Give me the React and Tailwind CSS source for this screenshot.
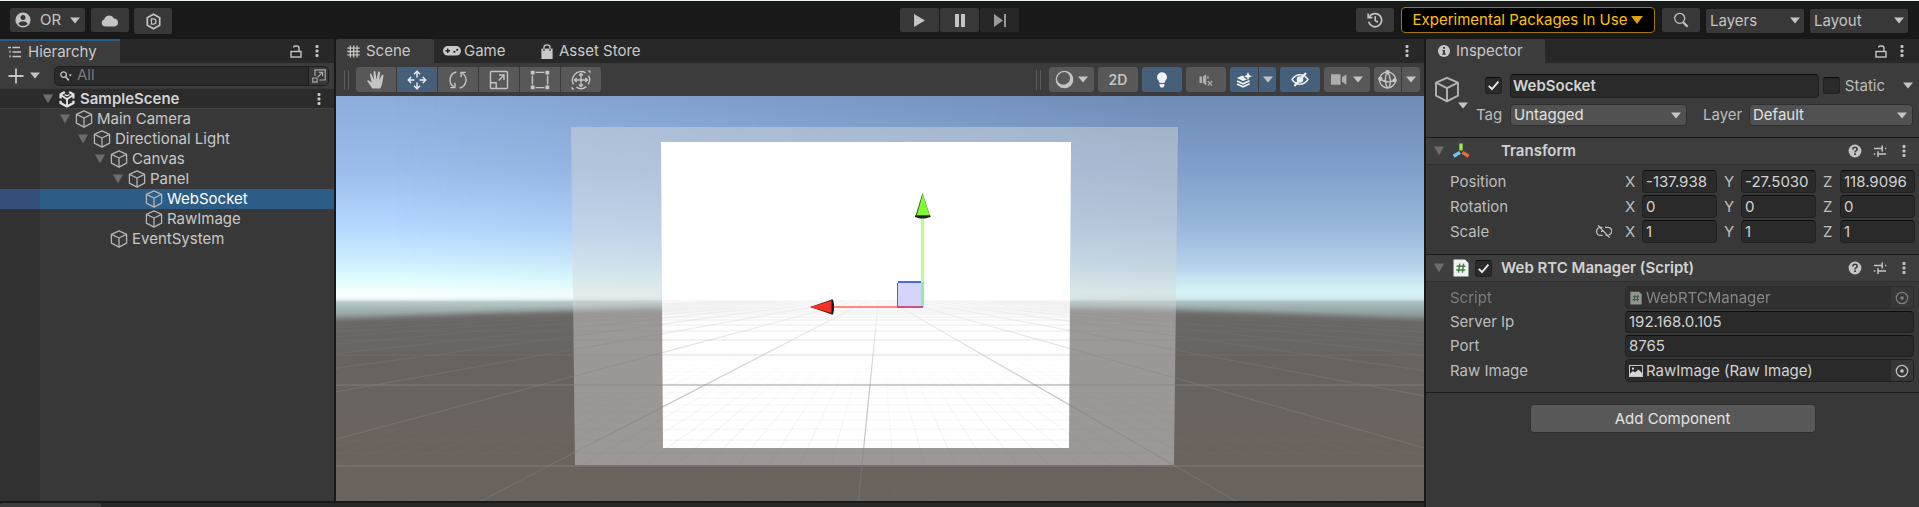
import React from "react";

const Caret = ({ className = "" }) => (
  <svg viewBox="0 0 10 7" className={"h-[7px] w-[10px] shrink-0 " + className} aria-hidden="true">
    <path d="M0 0.5h10L5 6.5z" fill="currentColor" />
  </svg>
);

const Foldout = () => (
  <svg viewBox="0 0 12 10" className="h-[10px] w-[12px] shrink-0 text-[#6c6c6c]" aria-hidden="true">
    <path d="M1 0.5h10L6 9.5z" fill="currentColor" />
  </svg>
);

const Dots = () => (
  <svg viewBox="0 0 4 14" className="h-[14px] w-[4px]" fill="#c4c4c4" aria-hidden="true">
    <rect x="0.5" y="1" width="3" height="3" rx="1" />
    <rect x="0.5" y="5.5" width="3" height="3" rx="1" />
    <rect x="0.5" y="10" width="3" height="3" rx="1" />
  </svg>
);

const DotsButton = () => (
  <button type="button" aria-label="More options" className="flex h-5 w-3 items-center justify-center">
    <Dots />
  </button>
);

const Lock = () => (
  <svg viewBox="0 0 12 13" className="h-[13px] w-[12px]" fill="none" stroke="#c4c4c4" strokeWidth="1.4" aria-hidden="true">
    <rect x="1" y="6.5" width="10" height="5.5" />
    <path d="M9 6.5V3.2Q9 1 7 1H5.5Q3.6 1 3.6 2.6" />
  </svg>
);

const Cube = ({ className = "h-[18px] w-[18px]" }) => (
  <svg viewBox="0 0 18 18" className={"shrink-0 " + className} fill="none" stroke="#b4b4b4" strokeWidth="1.3" strokeLinejoin="round" aria-hidden="true">
    <path d="M9 0.9L16.6 4.3V13.2L9 17.2L1.4 13.2V4.3Z" />
    <path d="M1.4 4.3L9 8L16.6 4.3M9 8V17.2" />
  </svg>
);

const UnityLogo = () => (
  <svg viewBox="0 0 18 18" className="h-[18px] w-[18px] shrink-0" fill="none" stroke="#e4e4e4" strokeWidth="2.3" aria-hidden="true">
    <path d="M6.8 1.9L2.6 4.4V8.6M11.2 1.9L15.4 4.4V8.6M2.6 10.8V13L9 16.4L15.4 13V10.8" />
    <path d="M9 9.2V16M9 9.2L3.2 5.2M9 9.2L14.8 5.2" strokeWidth="1.9" />
    <path d="M6.6 4.6L9 5.8L11.4 4.6" strokeWidth="1.4" />
  </svg>
);

const ScriptIcon = ({ className = "h-[18px] w-[16px]" }) => (
  <svg viewBox="0 0 16 18" className={"shrink-0 " + className} aria-hidden="true">
    <path d="M0.5 0.5H12L15.5 4V17.5H0.5Z" fill="#f0f0f0" />
    <path d="M6.7 4.6L5.5 13.6M10.6 4.6L9.4 13.6M3.6 7.3H12.4M3.2 11H12" stroke="#3d7d43" strokeWidth="1.4" fill="none" />
  </svg>
);

const Help = () => (
  <svg viewBox="0 0 14 14" className="h-[14px] w-[14px]" aria-hidden="true">
    <circle cx="7" cy="7" r="6.4" fill="#c4c4c4" />
    <path d="M4.9 5.4Q4.9 3.3 7 3.3T9.1 5.2Q9.1 6.3 7.9 6.9Q7 7.4 7 8.4" fill="none" stroke="#3c3c3c" strokeWidth="1.6" />
    <rect x="6.1" y="9.3" width="1.8" height="1.7" fill="#3c3c3c" />
  </svg>
);

const Preset = () => (
  <svg viewBox="0 0 14 14" className="h-[14px] w-[14px]" fill="none" stroke="#c4c4c4" strokeWidth="1.5" aria-hidden="true">
    <path d="M1 4.5H8.6M12 4.5H13.2M9.2 1.5V7.5M0.8 10H2.4M5 7.2V13M5.4 10H13" />
  </svg>
);

const Target = () => (
  <svg viewBox="0 0 14 14" className="h-[14px] w-[14px]" aria-hidden="true">
    <circle cx="7" cy="7" r="5.7" fill="none" stroke="#c4c4c4" strokeWidth="1.2" />
    <circle cx="7" cy="7" r="1.8" fill="#c4c4c4" />
  </svg>
);

/* ---------- top toolbar ---------- */

const barBtn = "flex h-6 items-center justify-center rounded-[2px] bg-[#383838] text-[#c4c4c4]";

function BarSelect({ label }) {
  return (
    <div className="relative w-[98px]">
      <select aria-label={label} className="h-6 w-full appearance-none rounded-[2px] bg-[#383838] pl-1 pr-4 text-[15px] leading-6 text-[#c4c4c4] outline-none">
        <option>{label}</option>
      </select>
      <Caret className="pointer-events-none absolute top-[9px] right-1 text-[#c4c4c4]" />
    </div>
  );
}

function TopBar() {
  return (
    <header className="grid h-[39px] shrink-0 grid-cols-[1fr_auto_1fr] items-start border-t border-[#e9f1ef] bg-[#191919] pt-[7px]">
      <div className="flex items-start pl-[10px]">
        <button type="button" className={barBtn + " w-[75px] gap-[9px] text-[15px]"}>
          <svg viewBox="0 0 16 16" className="h-4 w-4" aria-hidden="true">
            <circle cx="8" cy="8" r="7.6" fill="#c4c4c4" />
            <circle cx="8" cy="5.4" r="2.5" fill="#383838" />
            <path d="M3.3 11.9Q4.6 9.2 8 9.2T12.7 11.9Q10.8 14 8 14T3.3 11.9Z" fill="#383838" />
          </svg>
          <span>OR</span>
          <Caret />
        </button>
        <button type="button" aria-label="Cloud" className={barBtn + " ml-[6px] w-[38px]"}>
          <svg viewBox="0 0 18 13" className="h-[13px] w-[18px]" aria-hidden="true">
            <path d="M4 12.5A3.6 3.6 0 0 1 3.2 5.5A5.3 5.3 0 0 1 13 4.4A4.1 4.1 0 0 1 13.8 12.5Z" fill="#c4c4c4" />
          </svg>
        </button>
        <button type="button" aria-label="DevOps" className="ml-[5px] flex h-[26px] w-[38px] items-center justify-center rounded-[2px] bg-[#383838]">
          <svg viewBox="0 0 16 18" className="h-[17px] w-[15px]" fill="none" stroke="#c4c4c4" aria-hidden="true">
            <path d="M8 1.2L14.6 5V13L8 16.8L1.4 13V5Z" strokeWidth="1.8" />
            <path d="M5.8 6.2H8Q10.6 6.2 10.6 9T8 11.8H5.8Z" strokeWidth="1.4" />
          </svg>
        </button>
      </div>
      <div className="flex gap-px">
        <button type="button" aria-label="Play" className={barBtn + " w-[39px]"}>
          <svg viewBox="0 0 10 12" className="h-[13px] w-[11px]" aria-hidden="true"><path d="M0 0L10 6L0 12Z" fill="currentColor" /></svg>
        </button>
        <button type="button" aria-label="Pause" className={barBtn + " w-[39px]"}>
          <svg viewBox="0 0 10 13" className="h-[13px] w-[10px]" aria-hidden="true"><path d="M0 0H4V13H0ZM6 0H10V13H6Z" fill="currentColor" /></svg>
        </button>
        <button type="button" aria-label="Step" className="flex h-6 w-[39px] items-center justify-center rounded-[2px] bg-[#272727] text-[#9a9a9a]">
          <svg viewBox="0 0 12 13" className="h-[13px] w-[12px]" aria-hidden="true"><path d="M0 0L9 6.5L0 13ZM10 0H12V13H10Z" fill="currentColor" /></svg>
        </button>
      </div>
      <div className="flex items-start justify-end pr-[11px]">
        <button type="button" aria-label="History" className={barBtn + " w-[38px]"}>
          <svg viewBox="0 0 16 16" className="h-4 w-4" fill="none" stroke="currentColor" strokeWidth="1.7" aria-hidden="true">
            <path d="M2.2 5.2A6.6 6.6 0 1 1 1.7 9.8M8.2 4.2V8.5L10.8 10.2" />
            <path d="M1.2 1.6V5.6H5.4" />
          </svg>
        </button>
        <button type="button" className="-mt-px ml-[7px] flex h-[26px] w-[254px] items-center justify-center gap-1 rounded-[4px] border border-[#a37806] bg-black text-[15px] text-[#ffc107]">
          Experimental Packages In Use
          <svg viewBox="0 0 12 8" className="h-2 w-3" aria-hidden="true"><path d="M0 0H12L6 8Z" fill="#d9a30a" /></svg>
        </button>
        <button type="button" aria-label="Search" className={barBtn + " mr-[6px] ml-[7px] w-[38px]"}>
          <svg viewBox="0 0 16 16" className="h-4 w-4" fill="none" stroke="currentColor" aria-hidden="true">
            <circle cx="6.7" cy="6.3" r="5" strokeWidth="1.3" />
            <path d="M10.2 10.2L14.6 14.8" strokeWidth="2.2" />
          </svg>
        </button>
        <div className="flex gap-[6px]">
          <BarSelect label="Layers" />
          <BarSelect label="Layout" />
        </div>
      </div>
    </header>
  );
}

/* ---------- hierarchy ---------- */

const rows = [
  { name: "Main Camera", pad: "pl-[59px]", fold: true },
  { name: "Directional Light", pad: "pl-[77px]", fold: true },
  { name: "Canvas", pad: "pl-[94px]", fold: true },
  { name: "Panel", pad: "pl-[112px]", fold: true },
  { name: "WebSocket", pad: "pl-[145px]", selected: true },
  { name: "RawImage", pad: "pl-[145px]" },
  { name: "EventSystem", pad: "pl-[110px]" },
];

function Hierarchy() {
  return (
    <section className="flex w-[334px] shrink-0 flex-col bg-[#383838]">
      <div className="flex h-6 items-center justify-between bg-[#282828] pr-[11px]">
        <button type="button" className="flex h-6 w-[120px] items-center gap-[6px] border-t-2 border-[#2c5d87] bg-[#3c3c3c] pl-2 text-[15px] leading-5 text-[#c8c8c8]">
          <svg viewBox="0 0 14 12" className="h-3 w-[14px]" stroke="#c4c4c4" strokeWidth="1.3" aria-hidden="true">
            <path d="M0 1.5H3M4.5 1.5H12M4.5 6H13M4.5 10.5H13M2 4.5V6.8M2 9.3V11.4" fill="none" />
          </svg>
          Hierarchy
        </button>
        <div className="flex items-center gap-[9px]">
          <button type="button" aria-label="Lock hierarchy"><Lock /></button>
          <DotsButton />
        </div>
      </div>
      <div className="flex h-[25px] items-center bg-[#3c3c3c] pr-[5px] pl-2">
        <button type="button" aria-label="Create" className="flex w-[46px] shrink-0 items-center gap-[6px] text-[#c4c4c4]">
          <svg viewBox="0 0 16 16" className="h-4 w-4 shrink-0" aria-hidden="true"><path d="M8 0.5V15.5M0.5 8H15.5" stroke="currentColor" strokeWidth="1.8" /></svg>
          <Caret />
        </button>
        <div className="flex h-5 min-w-0 flex-1 items-center rounded-[5px] border border-[#1d1d1d] bg-[#2a2a2a] pl-[5px]">
          <svg viewBox="0 0 12 10" className="h-[10px] w-3 shrink-0" fill="none" stroke="#c4c4c4" aria-hidden="true">
            <circle cx="3.6" cy="3.6" r="2.8" strokeWidth="1.3" />
            <path d="M5.6 5.8L8.8 9.4" strokeWidth="1.6" />
            <path d="M8.6 3.6H12L10.3 5.6Z" fill="#c4c4c4" stroke="none" />
          </svg>
          <input aria-label="Search hierarchy" placeholder="All" className="h-[18px] min-w-0 flex-1 bg-transparent px-[5px] text-[15px] text-[#d2d2d2] outline-none placeholder:text-[#7a7a7a]" />
          <button type="button" aria-label="Open search window" className="flex h-[18px] w-5 shrink-0 items-center justify-center rounded-r-[4px] border-l border-[#1d1d1d] bg-[#383838]">
            <svg viewBox="0 0 14 14" className="h-[14px] w-[14px]" fill="none" stroke="#a8a8a8" strokeWidth="1.2" aria-hidden="true">
              <path d="M3 7V0.8H13.2V11H7.4M0.8 9H5V13.2H0.8ZM5.6 8.2L10.4 3.6M6.8 3.4H10.6V7.2" />
            </svg>
          </button>
        </div>
      </div>
      <div className="mt-px flex h-5 shrink-0 items-center border-b border-[#414141] bg-[#2b2b2b] pr-[9px] pl-[42px]">
        <Foldout />
        <div className="ml-1 flex items-center gap-1">
          <UnityLogo />
          <span className="text-[15px] font-semibold leading-5 text-[#d2d2d2]">SampleScene</span>
        </div>
        <div className="ml-auto"><DotsButton /></div>
      </div>
      <ul className="flex flex-1 flex-col bg-linear-to-r from-[#313131] from-[40px] to-[#383838] to-[40px]">
        {rows.map((r) => (
          <li
            key={r.name}
            className={
              "flex h-5 items-center text-[15px] leading-5 " + r.pad + " " +
              (r.selected
                ? "bg-linear-to-r from-[#34507a] from-[40px] to-[#2c5d87] to-[40px] text-white"
                : "text-[#c8c8c8]")
            }
          >
            {r.fold && <span className="mr-1"><Foldout /></span>}
            <Cube />
            <span className="ml-1">{r.name}</span>
          </li>
        ))}
      </ul>
    </section>
  );
}

/* ---------- scene ---------- */

const tool = "flex h-[25px] items-center justify-center bg-[#585858] text-[#c4c4c4]";
const toolOn = "flex h-[25px] items-center justify-center bg-[#46607c] text-[#f0f0f0]";

const Grip = () => (
  <span className="flex h-5 gap-[3px]" aria-hidden="true">
    <span className="w-px bg-[#5c5c5c]" />
    <span className="w-px bg-[#5c5c5c]" />
  </span>
);

const tools = [
  ["Hand", <g key="h" fill="currentColor" stroke="none"><path d="M6.2 18.5Q4.6 15.2 1.3 11.4Q0.9 10 2.4 10.2L5.6 12.6L3.9 4.6Q4 3.2 5.4 3.8L7.8 9.8L7.6 1.8Q8.4 0.4 9.5 1.7L10.4 9.4L12.3 1.8Q13.4 0.8 14.1 2.2L13.2 10L16 4.8Q17.4 4.2 17.5 5.7L16.4 12.4Q15.6 16.8 14.2 18.5Z" /></g>],
  ["Move", <g key="m"><path d="M10 2V7.4M10 12.6V18M2 10H7.4M12.6 10H18" /><path d="M7 4.2L10 1.3L13 4.2M7 15.8L10 18.7L13 15.8M4.2 7L1.3 10L4.2 13M15.8 7L18.7 10L15.8 13" /></g>],
  ["Rotate", <g key="r"><path d="M8.3 2A8.2 8.2 0 0 0 6 17M11.7 18A8.2 8.2 0 0 0 14 3" /><path d="M2.2 17.6H6.9V12.8M17.8 2.4H13.1V7.2" /></g>],
  ["Scale", <g key="s"><rect x="1.5" y="1.5" width="17" height="17" rx="1" /><path d="M1.5 12.8H7.2V18.5M9.6 10.4L14.8 5.2M10 5H15V10" /></g>],
  ["Rect", <g key="t"><path d="M5.6 2.4H14.4M5.6 17.6H14.4M2.4 5.6V14.4M17.6 5.6V14.4" /><path d="M0.8 0.8H4.6V4.6H0.8ZM15.4 0.8H19.2V4.6H15.4ZM0.8 15.4H4.6V19.2H0.8ZM15.4 15.4H19.2V19.2H15.4Z" fill="currentColor" stroke="none" /></g>],
  ["Transform", <g key="x"><path d="M3.6 4.6A8.4 8.4 0 0 1 14.6 2.8M17.4 5.6A8.4 8.4 0 0 1 17.2 14.4M15.2 16.6A8.4 8.4 0 0 1 5.4 17.2M2.6 14.4A8.4 8.4 0 0 1 3.6 4.6" /><path d="M10 4V16M4 10H16M8 5.6L10 3.6L12 5.6M8 14.4L10 16.4L12 14.4M5.6 8L3.6 10L5.6 12M14.4 8L16.4 10L14.4 12" /><path d="M16.4 0.5H19.5V3.6ZM0.5 16.4V19.5H3.6Z" fill="currentColor" stroke="none" /></g>],
];

const round = { 0: " rounded-l-[3px]", 5: " rounded-r-[3px]" };

function SceneToolbar() {
  return (
    <div className="flex h-[33px] shrink-0 items-center justify-between bg-[#3c3c3c] pr-1 pl-2">
      <div className="flex items-center gap-[7px]">
        <Grip />
        <div className="flex gap-px">
          {tools.map(([name, art], i) => (
            <button key={name} type="button" aria-label={name} className={(i === 1 ? toolOn : tool) + " w-10" + (round[i] || "")}>
              <svg viewBox="0 0 20 20" className="h-5 w-5" fill="none" stroke="currentColor" strokeWidth="1.4">{art}</svg>
            </button>
          ))}
        </div>
      </div>
      <div className="flex items-center gap-1">
        <span className="mr-1"><Grip /></span>
        <button type="button" aria-label="Draw mode" className={tool + " w-[45px] gap-1 rounded-[3px]"}>
          <svg viewBox="0 0 20 20" className="h-[19px] w-[19px]" aria-hidden="true">
            <circle cx="10" cy="10" r="8.6" fill="#c4c4c4" />
            <circle cx="8.8" cy="8.6" r="7" fill="#585858" />
            <circle cx="10" cy="10" r="8.6" fill="none" stroke="#c4c4c4" strokeWidth="1.4" />
          </svg>
          <Caret />
        </button>
        <button type="button" className={tool + " w-10 rounded-[3px] text-[14px] font-semibold"}>2D</button>
        <button type="button" aria-label="Lighting" className={toolOn + " w-10 rounded-[3px]"}>
          <svg viewBox="0 0 12 16" className="h-4 w-3" fill="currentColor" aria-hidden="true">
            <path d="M6 0.3A5 5 0 0 1 11 5.2Q11 7.4 9 9.4L8.4 11H3.6L3 9.4Q1 7.4 1 5.2A5 5 0 0 1 6 0.3Z" />
            <path d="M3.6 12H8.4V13.4L7.4 15.4H4.6L3.6 13.4Z" />
          </svg>
        </button>
        <button type="button" aria-label="Audio" className={tool + " w-10 rounded-[3px]"}>
          <svg viewBox="0 0 14 12" className="h-3 w-[14px]" fill="#b0b0b0" stroke="#b0b0b0" aria-hidden="true">
            <path d="M0.5 2.4H3V9H0.5ZM4 2.4L7.2 0.2V11.2L4 9Z" stroke="none" />
            <path d="M8.8 7L13.2 11.6M13.2 7L8.8 11.6M9 2V5" strokeWidth="1.2" />
          </svg>
        </button>
        <div className="flex gap-px">
          <button type="button" aria-label="Effects" className={toolOn + " w-7 rounded-l-[3px]"}>
            <svg viewBox="0 0 16 16" className="h-4 w-4" aria-hidden="true">
              <path d="M6.4 3.4L0.8 6L7 9L11 7.4Q8.4 6.6 7.6 4.6Z" fill="currentColor" />
              <path d="M1 9L7 11.8L13.6 8.8M1 12L7 14.8L13.6 11.8" fill="none" stroke="currentColor" strokeWidth="1.8" />
              <path d="M12 0L13.2 3L16 4.2L13.2 5.4L12 8.2L10.8 5.4L8 4.2L10.8 3Z" fill="currentColor" />
            </svg>
          </button>
          <button type="button" aria-label="Effects options" className={toolOn + " w-[17px] rounded-r-[3px]"}><Caret className="text-[#c4c4c4]" /></button>
        </div>
        <button type="button" aria-label="Scene visibility" className={toolOn + " w-10 rounded-[3px]"}>
          <svg viewBox="0 0 18 15" className="h-[15px] w-[18px]" fill="none" stroke="currentColor" strokeWidth="1.4" aria-hidden="true">
            <path d="M1 7.5Q4.4 2.8 9 2.8T17 7.5Q13.6 12.2 9 12.2T1 7.5Z" />
            <circle cx="9" cy="7.5" r="2.6" fill="currentColor" />
            <path d="M3.4 14L15 1" strokeWidth="2" />
          </svg>
        </button>
        <button type="button" aria-label="Camera" className={tool + " w-[46px] gap-[6px] rounded-[3px]"}>
          <svg viewBox="0 0 16 11" className="h-[11px] w-4" fill="#adadad" aria-hidden="true">
            <path d="M0 0.3H9.6V10.7H0ZM11 3.2L15.4 0.3V10.7L11 7.8Z" />
          </svg>
          <Caret />
        </button>
        <div className="flex gap-px">
          <button type="button" aria-label="Gizmos" className={tool + " w-[27px] rounded-l-[3px]"}>
            <svg viewBox="0 0 18 18" className="h-[19px] w-[19px]" fill="none" stroke="#c4c4c4" strokeWidth="1.3" aria-hidden="true">
              <circle cx="9" cy="9.4" r="7.6" />
              <path d="M9 1.5Q4.8 9 9 17M9 1.5Q13.6 9 10.4 17M1.6 8Q8 13.6 16.4 9.6" />
              <g fill="#c4c4c4" stroke="none"><circle cx="9" cy="2.2" r="2.1" /><circle cx="2.2" cy="8.4" r="2.1" /><circle cx="15.8" cy="9.8" r="2.1" /></g>
            </svg>
          </button>
          <button type="button" aria-label="Gizmos options" className={tool + " w-[18px] rounded-r-[3px]"}><Caret /></button>
        </div>
      </div>
    </div>
  );
}

const VX = 543;
const VY = 199;
const majorSlopes = [];
for (let i = -14; i <= 14; i++) majorSlopes.push(-0.1 + i * 1.833);
const minorSlopes = [];
for (let i = -34; i <= 34; i++) if (i % 10 !== 0) minorSlopes.push(-0.1 + i * 0.1833);
const majorY = [370, 289, 259, 244, 235, 229, 224, 221, 218, 216, 214, 212];
const minorY = [];
for (let n = 1.14; n < 2.9; n += 0.1) minorY.push(VY + 180 / n);

function Viewport() {
  return (
    <svg viewBox="0 0 1088 405" preserveAspectRatio="xMidYMid slice" className="block min-h-0 w-full flex-1" role="img" aria-label="Scene view">
      <defs>
        <linearGradient id="skyL" x1="0" y1="0" x2="0" y2="210" gradientUnits="userSpaceOnUse">
          <stop offset="0" stopColor="#8cacdc" />
          <stop offset="0.35" stopColor="#9cbdeb" />
          <stop offset="0.62" stopColor="#b4d7ff" />
          <stop offset="0.78" stopColor="#cdeeff" />
          <stop offset="0.87" stopColor="#defeff" />
          <stop offset="0.95" stopColor="#fbffff" />
          <stop offset="1" stopColor="#e4fcfd" />
        </linearGradient>
        <linearGradient id="skyR" x1="0" y1="0" x2="0" y2="210" gradientUnits="userSpaceOnUse">
          <stop offset="0" stopColor="#6f8cb6" />
          <stop offset="0.35" stopColor="#809fca" />
          <stop offset="0.62" stopColor="#98b7dc" />
          <stop offset="0.8" stopColor="#b3d1e8" />
          <stop offset="0.93" stopColor="#d6f3f6" />
          <stop offset="1" stopColor="#cdeaeb" />
        </linearGradient>
        <linearGradient id="across" x1="0" y1="0" x2="1" y2="0">
          <stop offset="0.05" stopColor="#fff" stopOpacity="0" />
          <stop offset="0.75" stopColor="#fff" />
        </linearGradient>
        <mask id="side" maskUnits="userSpaceOnUse" x="0" y="0" width="1088" height="405">
          <rect width="1088" height="405" fill="url(#across)" />
        </mask>
        <linearGradient id="fog" x1="0" y1="200" x2="0" y2="230" gradientUnits="userSpaceOnUse">
          <stop offset="0" stopColor="#6c7676" stopOpacity="0" />
          <stop offset="0.13" stopColor="#6c7676" stopOpacity="0.08" />
          <stop offset="0.2" stopColor="#6c7676" stopOpacity="0.35" />
          <stop offset="0.55" stopColor="#6c7676" stopOpacity="0.58" />
          <stop offset="1" stopColor="#6c7070" stopOpacity="1" />
        </linearGradient>
        <linearGradient id="ground" x1="0" y1="210" x2="0" y2="405" gradientUnits="userSpaceOnUse">
          <stop offset="0" stopColor="#6a6666" />
          <stop offset="0.35" stopColor="#69645f" />
          <stop offset="1" stopColor="#6b625c" />
        </linearGradient>
        <filter id="soft" x="-5%" y="-20%" width="110%" height="140%"><feGaussianBlur stdDeviation="1 2.6" /></filter>
        <linearGradient id="fadeMajor" x1="0" y1="203" x2="0" y2="300" gradientUnits="userSpaceOnUse">
          <stop offset="0" stopColor="#fff" stopOpacity="0.06" />
          <stop offset="0.3" stopColor="#fff" stopOpacity="0.35" />
          <stop offset="1" stopColor="#fff" />
        </linearGradient>
        <linearGradient id="fadeMinor" x1="0" y1="255" x2="0" y2="370" gradientUnits="userSpaceOnUse">
          <stop offset="0" stopColor="#fff" stopOpacity="0" />
          <stop offset="1" stopColor="#fff" />
        </linearGradient>
        <mask id="mMajor" maskUnits="userSpaceOnUse" x="0" y="205" width="1088" height="200"><rect y="205" width="1088" height="200" fill="url(#fadeMajor)" /></mask>
        <mask id="mMinor" maskUnits="userSpaceOnUse" x="0" y="205" width="1088" height="200"><rect y="205" width="1088" height="200" fill="url(#fadeMinor)" /></mask>
        <linearGradient id="haze" x1="0" y1="204" x2="0" y2="230" gradientUnits="userSpaceOnUse">
          <stop offset="0" stopColor="#808080" stopOpacity="0.06" />
          <stop offset="1" stopColor="#808080" stopOpacity="0" />
        </linearGradient>
      </defs>
      <rect width="1088" height="405" fill="url(#skyL)" />
      <rect width="1088" height="405" fill="url(#skyR)" mask="url(#side)" />
      <rect y="200" width="1088" height="60" fill="url(#fog)" />
      <path d="M-40 226Q544 195 1128 226V460H-40Z" fill="url(#ground)" filter="url(#soft)" />
      <path d="M235 31H842L838 369H239Z" fill="#d8d8d8" fillOpacity="0.46" />
      <path d="M325 46H735L733 352H327Z" fill="#fff" />
      <rect y="204" width="1088" height="26" fill="url(#haze)" />
      <g mask="url(#mMajor)" stroke="#808080" strokeOpacity="0.45" strokeWidth="1.2">
        {majorSlopes.map((s) => <line key={s} x1={VX + s * 6} y1={VY + 6} x2={VX + s * 210} y2={VY + 210} />)}
        {majorY.map((y) => <line key={y} x1="0" x2="1088" y1={y} y2={y} strokeWidth={y === 289 || y === 370 ? 2 : 1} />)}
      </g>
      <g mask="url(#mMinor)" stroke="#808080" strokeOpacity="0.11" strokeWidth="1.2">
        {minorSlopes.map((s) => <line key={s} x1={VX + s * 20} y1={VY + 20} x2={VX + s * 210} y2={VY + 210} />)}
        {minorY.map((y) => <line key={y} x1="0" x2="1088" y1={y} y2={y} />)}
      </g>
      <rect x="561.5" y="186.5" width="25" height="25" fill="#d5d5f9" />
      <path d="M561.5 211V187" stroke="#4060f0" strokeWidth="1" />
      <path d="M562 186H587" stroke="#4a66f4" strokeWidth="2" />
      <path d="M586.5 122V186" stroke="#b9ff8c" strokeWidth="3" />
      <path d="M586.5 186V211" stroke="#8ef0a8" strokeWidth="3" />
      <path d="M497 211H561" stroke="#ff8a82" strokeWidth="2" />
      <path d="M561 211H587" stroke="#cc5285" strokeWidth="2" />
      <path d="M586.5 97L579.5 120H594Z" fill="#2f5a17" />
      <path d="M586.8 98L580.8 119.5H593.5Z" fill="#80fb33" />
      <path d="M579 119.5H594.5V121L589 122.5H584L579 121Z" fill="#1e2420" />
      <path d="M474 211L496 203.5V218.5Z" fill="#5c1712" />
      <path d="M474 211L496 204.8V217Z" fill="#f63127" />
      <path d="M495.5 203.5H497L498 208V214L497 218.5H495.5Z" fill="#171b1b" />
    </svg>
  );
}

function Scene() {
  return (
    <section className="flex min-w-0 flex-1 flex-col bg-[#282828]">
      <div className="flex h-6 shrink-0 items-center justify-between pr-[11px] text-[15px] leading-5 text-[#c8c8c8]">
        <div className="flex">
          <button type="button" className="flex h-6 w-[98px] items-center gap-[6px] rounded-t-[3px] bg-[#3c3c3c] pl-[11px]">
            <svg viewBox="0 0 14 14" className="h-[13px] w-[13px]" stroke="#c4c4c4" strokeWidth="1.4" aria-hidden="true"><path d="M3.6 0.5V13.5M7.2 0.5V13.5M10.8 0.5V13.5M0.3 3.4H13.7M0.3 7H13.7M0.3 10.6H13.7" /></svg>
            Scene
          </button>
          <button type="button" className="flex h-6 w-[98px] items-center gap-[3px] pl-[9px]">
            <svg viewBox="0 0 18 10" className="h-[10px] w-[18px]" aria-hidden="true">
              <rect width="18" height="9.6" rx="4.8" fill="#c8c8c8" />
              <path d="M2.4 4.8H7M4.7 2.5V7.1" stroke="#282828" strokeWidth="1.5" />
              <circle cx="11.4" cy="5.8" r="1.1" fill="#282828" /><circle cx="14.2" cy="3.8" r="1.1" fill="#282828" />
            </svg>
            Game
          </button>
          <button type="button" className="flex h-6 items-center gap-[6px] pl-[9px]">
            <svg viewBox="0 0 12 15" className="h-[15px] w-3" aria-hidden="true">
              <path d="M0.4 4.6H11.6V15H0.4Z" fill="#c8c8c8" />
              <path d="M3 6.4V3Q3 0.8 6 0.8T9 3V6.4" fill="none" stroke="#c8c8c8" strokeWidth="1.3" />
              <path d="M3 4.8V7M9 4.8V7" stroke="#282828" strokeWidth="1.1" />
            </svg>
            Asset Store
          </button>
        </div>
        <DotsButton />
      </div>
      <SceneToolbar />
      <Viewport />
    </section>
  );
}

/* ---------- inspector ---------- */

const field = "rounded-[4px] border border-[#212121] border-t-[#0d0d0d] bg-[#2a2a2a] text-[15px] text-[#d2d2d2] outline-none";

function Check({ label, checked = false, id }) {
  return (
    <span className="relative flex h-[17px] w-[17px] shrink-0">
      <input id={id} type="checkbox" aria-label={label} defaultChecked={checked} className="peer h-[17px] w-[17px] appearance-none rounded-[3px] border border-[#212121] border-t-[#0d0d0d] bg-[#2a2a2a]" />
      <svg viewBox="0 0 17 17" className="pointer-events-none absolute inset-0 hidden h-[17px] w-[17px] peer-checked:block" aria-hidden="true">
        <path d="M3.8 8.8L7 12L13.4 4.6" fill="none" stroke="#e6e6e6" strokeWidth="1.9" />
      </svg>
    </span>
  );
}

function Dropdown({ id, value, className }) {
  return (
    <div className={"relative " + className}>
      <select id={id} className="h-[22px] w-full appearance-none rounded-[4px] border border-[#303030] bg-[#515151] pl-[3px] text-[15px] leading-5 text-[#e0e0e0] outline-none">
        <option>{value}</option>
      </select>
      <Caret className="pointer-events-none absolute top-2 right-[6px] text-[#c4c4c4]" />
    </div>
  );
}

function ComponentHeader({ icon, title, check }) {
  return (
    <div className="flex h-7 items-center border-t border-b border-t-[#1a1a1a] border-b-[#303030] bg-[#3e3e3e] pr-[9px] pl-[7px]">
      <Foldout />
      <span className="ml-[7px] flex w-[18px] justify-center">{icon}</span>
      <span className="ml-[5px] flex w-[26px]">{check}</span>
      <h2 className="text-[15px] leading-5 font-semibold text-[#d2d2d2]">{title}</h2>
      <div className="ml-auto flex items-center gap-[11px]">
        <button type="button" aria-label={title + " help"}><Help /></button>
        <button type="button" aria-label={title + " presets"}><Preset /></button>
        <DotsButton />
      </div>
    </div>
  );
}

function Vector({ name, values, icon }) {
  return (
    <div className="flex h-[23px] items-center text-[15px] leading-5 text-[#bdbdbd]">
      <span className="w-[146px]">{name}</span>
      <span className="flex w-[29px]">{icon}</span>
      <div className="grid flex-1 grid-cols-3 gap-[7px]">
        {["X", "Y", "Z"].map((axis, i) => (
          <label key={axis} className="flex min-w-0 items-center">
            <span className="w-[17px] shrink-0">{axis}</span>
            <input aria-label={name + " " + axis} defaultValue={values[i]} className={field + " h-[23px] w-0 min-w-0 flex-1 pl-[3px]"} />
          </label>
        ))}
      </div>
    </div>
  );
}

function TextRow({ label, id, value }) {
  return (
    <div className="flex h-[22px] items-center">
      <label htmlFor={id} className="w-[175px] text-[15px] leading-5 text-[#bdbdbd]">{label}</label>
      <input id={id} defaultValue={value} className={field + " h-[22px] min-w-0 flex-1 pl-[3px]"} />
    </div>
  );
}

function ObjectRow({ label, value, icon, muted }) {
  return (
    <div className={"flex h-[23px] items-center text-[15px] leading-5 " + (muted ? "opacity-50" : "")}>
      <span className="w-[175px] text-[#bdbdbd]">{label}</span>
      <div className="flex h-[23px] min-w-0 flex-1 items-center rounded-[4px] border border-[#1f1f1f] bg-[#2a2a2a] pl-[3px] text-[#d2d2d2]">
        {icon}
        <span className="ml-[3px]">{value}</span>
        <button type="button" disabled={muted} aria-label={"Select " + label} className="ml-auto flex h-[21px] w-[22px] items-center justify-center rounded-r-[3px] bg-[#373737]"><Target /></button>
      </div>
    </div>
  );
}

function Inspector() {
  return (
    <aside className="flex w-[493px] shrink-0 flex-col bg-[#383838]">
      <div className="flex h-6 shrink-0 items-center justify-between bg-[#282828] pr-[11px]">
        <button type="button" className="flex h-6 w-[119px] items-center gap-[6px] rounded-t-[3px] bg-[#3c3c3c] pl-3 text-[15px] leading-5 text-[#c8c8c8]">
          <svg viewBox="0 0 12 12" className="h-3 w-3" aria-hidden="true">
            <circle cx="6" cy="6" r="6" fill="#c8c8c8" />
            <path d="M5 2H7V3.8H5ZM4.4 5H7V8.6H7.8V9.8H4.2V8.6H5V6.2H4.4Z" fill="#3c3c3c" />
          </svg>
          Inspector
        </button>
        <div className="flex items-center gap-[9px]">
          <button type="button" aria-label="Lock inspector"><Lock /></button>
          <DotsButton />
        </div>
      </div>
      <div className="flex h-[74px] shrink-0 bg-[#3c3c3c] pt-[11px] pr-[6px] pl-[8px]">
        <button type="button" aria-label="Object icon" className="mt-[2px] flex h-[34px] w-[42px] items-start">
          <Cube className="h-[27px] w-[26px]" />
          <Caret className="mt-[26px] -ml-[2px] text-[#c4c4c4]" />
        </button>
        <div className="flex flex-1 flex-col gap-[7px]">
          <div className="flex h-[23px] items-center pl-[9px]">
            <Check label="Active" checked />
            <input aria-label="Object name" defaultValue="WebSocket" className={field + " ml-2 h-6 min-w-0 flex-1 pl-[2px] font-semibold"} />
            <span className="mr-[5px] ml-1 flex"><Check id="static" /></span>
            <label htmlFor="static" className="text-[15px] leading-5 text-[#bdbdbd]">Static</label>
            <button type="button" aria-label="Static options" className="ml-[18px]"><Caret className="text-[#c4c4c4]" /></button>
          </div>
          <div className="flex h-[22px] items-center text-[15px] leading-5 text-[#bdbdbd]">
            <label htmlFor="tag" className="w-[34px]">Tag</label>
            <Dropdown id="tag" value="Untagged" className="flex-[177]" />
            <label htmlFor="layer" className="w-[62px] pl-4">Layer</label>
            <Dropdown id="layer" value="Default" className="flex-[164]" />
          </div>
        </div>
      </div>
      <ComponentHeader
        title="Transform"
        icon={
          <svg viewBox="0 0 18 18" className="h-[18px] w-[18px]" strokeWidth="3.4" aria-hidden="true">
            <path d="M9 1.5V8.4" stroke="#9bea4e" /><path d="M8 10.4L1.6 14.2" stroke="#6cc5f4" /><path d="M10.4 10.4L16.6 14.2" stroke="#ec6a3c" />
          </svg>
        }
      />
      <div className="flex flex-col gap-[2px] pt-[5px] pr-1 pb-[11px] pl-6">
        <Vector name="Position" values={["-137.938", "-27.5030", "118.9096"]} />
        <Vector name="Rotation" values={["0", "0", "0"]} />
        <Vector
          name="Scale"
          values={["1", "1", "1"]}
          icon={
            <svg viewBox="0 0 16 13" className="h-[13px] w-4" fill="none" stroke="#c4c4c4" strokeWidth="1.3" aria-hidden="true">
              <path d="M6.4 2.4H4.6A3.6 3.6 0 0 0 4.6 10.4H6.6M9 2.4H11.4A3.6 3.6 0 0 1 12.6 9.8M5 6.4H6.6M2 0.4L13.6 12.6M9.4 10.4H10.4" />
            </svg>
          }
        />
      </div>
      <ComponentHeader title="Web RTC Manager (Script)" icon={<ScriptIcon />} check={<Check label="Enabled" checked />} />
      <div className="flex flex-col gap-[2px] border-b border-[#1a1a1a] pt-1 pr-[5px] pb-[10px] pl-6">
        <ObjectRow label="Script" value="WebRTCManager" muted icon={<ScriptIcon className="mx-px h-[14px] w-[12px]" />} />
        <TextRow id="ip" label="Server Ip" value="192.168.0.105" />
        <TextRow id="port" label="Port" value="8765" />
        <ObjectRow
          label="Raw Image"
          value="RawImage (Raw Image)"
          icon={
            <svg viewBox="0 0 14 12" className="h-3 w-[14px]" aria-hidden="true">
              <rect x="0.5" y="0.5" width="13" height="11" fill="none" stroke="#c4c4c4" />
              <path d="M1 11V8.6L4 6L6 7.4L9.4 4.4L13 8V11Z" fill="#d6d6d6" /><rect x="3" y="2.6" width="2" height="2" fill="#d6d6d6" />
            </svg>
          }
        />
      </div>
      <button type="button" className="mx-auto mt-[11px] h-[29px] w-[286px] rounded-[4px] border border-[#303030] bg-[#585858] text-[15px] leading-5 text-[#e4e4e4]">
        Add Component
      </button>
    </aside>
  );
}

export default function App() {
  return (
    <div className="flex h-screen flex-col bg-[#191919] font-[Inter,sans-serif]">
      <TopBar />
      <main className="flex min-h-0 flex-1 gap-[2px]">
        <div className="flex min-w-0 flex-1 flex-col">
          <div className="flex min-h-0 flex-1 gap-[2px]">
            <Hierarchy />
            <Scene />
          </div>
          <div className="mt-[2px] flex h-1 shrink-0 bg-[#282828]">
            <div className="w-[101px] rounded-t-[3px] bg-[#3c3c3c]" />
          </div>
        </div>
        <Inspector />
      </main>
    </div>
  );
}
